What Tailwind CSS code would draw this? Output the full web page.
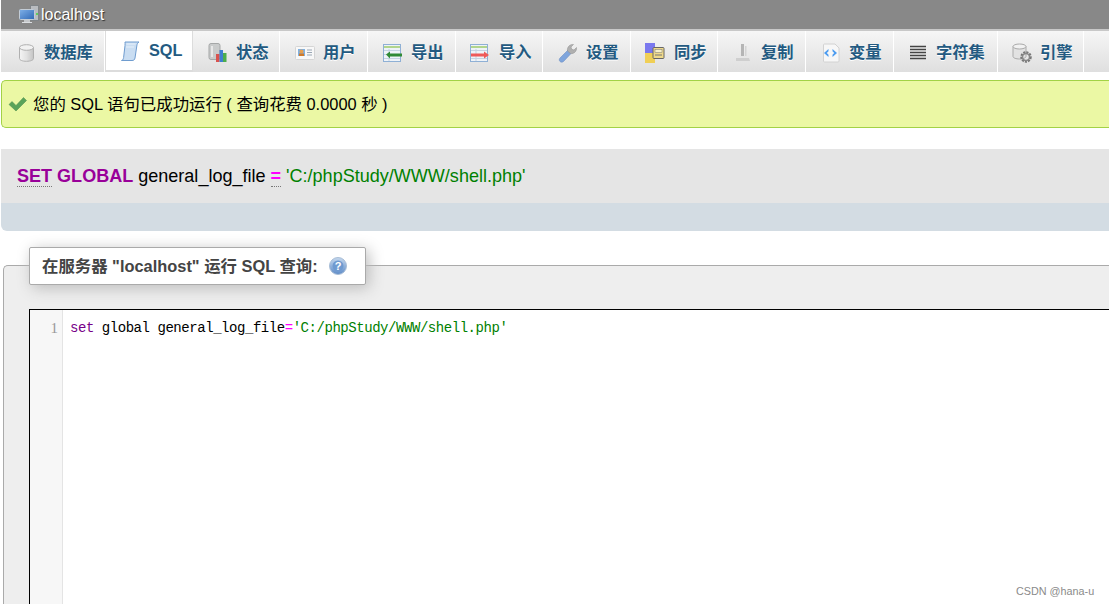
<!DOCTYPE html>
<html lang="zh">
<head>
    <meta charset="UTF-8"/>
    <title>localhost / SQL</title>
    <script src="https://cdn.jsdelivr.net/npm/@tailwindcss/browser@4"></script>
</head>
<body class="bg-white h-[604px] w-[1109px] overflow-hidden relative pl-px font-['Liberation_Sans','Noto_Sans_CJK_SC',sans-serif]">

<!-- server bar -->
<div class="h-[31px] bg-[#888888] border-b-2 border-[#c8c8c8] flex items-center pl-[18px] text-[16px] text-white [text-shadow:1px_1px_1px_#333]">
    <svg width="21" height="19" viewBox="0 0 21 19" class="mr-px">
        <defs><linearGradient id="screen" x1="0" y1="0" x2="1" y2="1"><stop offset="0" stop-color="#7fb0e8"/><stop offset="1" stop-color="#2f68b5"/></linearGradient></defs>
        <rect x="11.500" y="0.500" width="8" height="15" fill="#b9bcc0" stroke="#7f8488"/>
        <rect x="17" y="8" width="2" height="2" fill="#5fd05f"/>
        <rect x="0.500" y="4.500" width="15" height="10" rx="1" fill="url(#screen)" stroke="#c3ccd6"/>
        <rect x="5" y="15" width="6" height="2" fill="#c5c8cb"/>
        <rect x="3" y="17" width="10" height="1" fill="#dcdfe2"/>
    </svg>
    <span>localhost</span>
</div>

<!-- tabs -->
<nav class="h-[41px] flex bg-gradient-to-b from-[#f6f6f6] to-[#dfdfdf] text-[#235a81] text-[16.3px] font-bold [text-shadow:0_1px_0_#fff]">
    <a class="w-[104px] pt-[2px] border-r border-white flex items-center pl-[17px] gap-[9px]">
        <svg width="17" height="18" viewBox="0 0 17 18"><defs><linearGradient id="db" x1="0" x2="1" y1="0" y2="0"><stop offset="0" stop-color="#f4f4f4"/><stop offset=".5" stop-color="#e2e2e2"/><stop offset="1" stop-color="#c4c4c4"/></linearGradient></defs><path d="M1.500 3.500v11c0 1.600 3 2.800 7 2.800s7-1.200 7-2.800v-11z" fill="url(#db)" stroke="#b0b0b0"/><ellipse cx="8.500" cy="3.500" rx="7" ry="2.800" fill="#f1f1f1" stroke="#b0b0b0"/></svg>
        <span>数据库</span>
    </a>
    <a class="w-[88px] bg-white border-x border-b-2 border-x-[#dcdcdc] border-b-[#dcdcdc] flex items-center pl-[14px] gap-[9px]">
        <svg width="20" height="20" viewBox="0 0 20 20"><path d="M5 1h14c-1.500 1-2 2-2.200 4L15 17c-.3 2-1.500 2.500-3 2.500H1.500C3 19 3.300 18 3.600 16.500L5 4.500C5.200 3 5 2 5 1z" fill="#c9ddf2" stroke="#6f9ccf"/><path d="M6.500 3h9M6 6h8" stroke="#e6f0fa"/></svg>
        <span>SQL</span>
    </a>
    <a class="w-[87px] pt-[2px] border-r border-white flex items-center pl-[15px] gap-[8px]">
        <svg width="20" height="20" viewBox="0 0 20 20"><rect x="1" y="0.500" width="11" height="16" rx="2" fill="#c9cbcb" stroke="#a5a7a7"/><rect x="3" y="3" width="2" height="11" fill="#e8e8e8"/><rect x="8" y="11" width="3.500" height="8" fill="#d9534f"/><rect x="11.500" y="7" width="3.500" height="12" fill="#3f7fd0"/><rect x="15" y="10" width="3.500" height="9" fill="#4cae4c"/></svg>
        <span>状态</span>
    </a>
    <a class="w-[88px] pt-[2px] border-r border-white flex items-center pl-[15px] gap-[8px]">
        <svg width="20" height="16" viewBox="0 0 20 16"><rect x="0.500" y="1.500" width="19" height="13" rx="1" fill="#f8f8f8" stroke="#d5d5d5"/><rect x="3" y="4" width="7" height="7" fill="#7fb0e0"/><circle cx="6.500" cy="6.500" r="2" fill="#e8a050"/><rect x="4" y="8.500" width="5" height="2.500" fill="#d07a2a"/><path d="M12 5h5M12 7.500h5M12 10h5" stroke="#9aa7b5"/></svg>
        <span>用户</span>
    </a>
    <a class="w-[88px] pt-[2px] border-r border-white flex items-center pl-[15px] gap-[8px]">
        <svg width="20" height="18" viewBox="0 0 20 18"><rect x="0.500" y="0.500" width="17" height="17" fill="#eef3f8" stroke="#8fb0d5"/><path d="M1 3h16" stroke="#9ccb6a" stroke-width="1.500"/><path d="M1 6.500h16M1 10.500h16M1 14.500h16M6 5v12" stroke="#c5d3e2"/><path d="M3 10.500l4-3v2h12v3H7v2z" fill="#2f8a35"/></svg>
        <span>导出</span>
    </a>
    <a class="w-[87px] pt-[2px] border-r border-white flex items-center pl-[14px] gap-[9px]">
        <svg width="20" height="18" viewBox="0 0 20 18"><rect x="0.500" y="0.500" width="17" height="17" fill="#eef3f8" stroke="#8fb0d5"/><path d="M1 3h16" stroke="#9ccb6a" stroke-width="1.500"/><path d="M1 6.500h16M1 10.500h16M1 14.500h16M6 5v12" stroke="#c5d3e2"/><path d="M1 9.500h13v-2l5 3.500-5 3.500v-2H1z" fill="#ee5a5a"/></svg>
        <span>导入</span>
    </a>
    <a class="w-[88px] pt-[2px] border-r border-white flex items-center pl-[15px] gap-[8px]">
        <svg width="20" height="20" viewBox="0 0 20 20"><path d="M10 7L2 15c-2.200 2.500 1 5.500 3.500 3.500L13 10.500z" fill="#7fa5dc" stroke="#6f90c5" stroke-width=".6"/><path d="M9.500 8c-.7-4 2.500-7 6-6.500l-2.500 2.500.7 2.300 2.300.7L18.500 4.500c.5 3.500-2.500 6.800-6 6z" fill="#b0b0b0" stroke="#8c8c8c" stroke-width=".5"/></svg>
        <span>设置</span>
    </a>
    <a class="w-[87px] pt-[2px] border-r border-white flex items-center pl-[14px] gap-[9px]">
        <svg width="20" height="20" viewBox="0 0 20 20"><rect x="0" y="0" width="10" height="10" fill="#7a78ee"/><rect x="0" y="10" width="10" height="10" fill="#f0cf55"/><rect x="8" y="4.500" width="11" height="11" rx="1" fill="#efd98a" stroke="#666"/><rect x="10" y="6.500" width="7" height="3" fill="#f8f0c8" stroke="#777" stroke-width=".5"/><path d="M10 12h7" stroke="#777"/></svg>
        <span>同步</span>
    </a>
    <a class="w-[88px] pt-[2px] border-r border-white flex items-center pl-[17px] gap-[10px]">
        <svg width="16" height="20" viewBox="0 0 16 20"><path d="M6 1h3v12H6z" fill="#b5b5b5"/><path d="M10 3h1.500v10H10z" fill="#d4d4d4"/><path d="M1 15h13l1 3H1z" fill="#cfcfcf"/></svg>
        <span>复制</span>
    </a>
    <a class="w-[88px] pt-[2px] border-r border-white flex items-center pl-[15px] gap-[8px]">
        <svg width="20" height="20" viewBox="0 0 20 20"><path d="M3.500 1H14l4 4v13c0 .6-.4 1-1 1H3.500c-.6 0-1-.4-1-1V2c0-.6.4-1 1-1z" fill="#f7f7f7" stroke="#d2d2d2"/><path d="M7.500 6L3 10l4.500 4V11.700L5.800 10l1.700-1.700zM11.500 6L16 10l-4.500 4V11.700L13.200 10l-1.700-1.700z" fill="#4c9cf0"/></svg>
        <span>变量</span>
    </a>
    <a class="w-[104px] pt-[2px] border-r border-white flex items-center pl-[16px] gap-[10px]">
        <svg width="16" height="16" viewBox="0 0 16 16"><path d="M0 1.500h16M0 4.500h16M0 7.500h16M0 10.500h16M0 13.500h16" stroke="#444" stroke-width="1.700"/></svg>
        <span>字符集</span>
    </a>
    <a class="w-[86px] pt-[2px] border-r border-white flex items-center pl-[14px] gap-[8px]">
        <svg width="20" height="20" viewBox="0 0 20 20"><path d="M1 3.500v10c0 1.400 3 2.500 6.500 2.500s6.500-1.100 6.500-2.500v-10z" fill="#e2e2e2" stroke="#aaa"/><ellipse cx="7.500" cy="3.500" rx="6.500" ry="2.500" fill="#f1f1f1" stroke="#aaa"/><circle cx="14" cy="14" r="4.500" fill="none" stroke="#777" stroke-width="2.500" stroke-dasharray="2 1"/><circle cx="14" cy="14" r="3.500" fill="none" stroke="#888" stroke-width="1.500"/></svg>
        <span>引擎</span>
    </a>
</nav>

<!-- success message -->
<div class="mt-[8px] h-[48px] bg-[#ebf8a4] border border-[#a2d246] rounded-l-[5px] border-r-0 flex items-center pl-[6px] text-[16.4px] text-black">
    <svg width="19" height="16" viewBox="0 0 19 16" class="mr-[6px]"><path d="M1 8.500l3-3 4 4L15.500 1.500l3 3L8 15z" fill="#5aa45a" stroke="#4a8a4a" stroke-width=".5"/></svg>
    <span>您的 SQL 语句已成功运行 ( 查询花费 0.0000 秒 )</span>
</div>

<!-- query box -->
<div class="mt-[21px]">
    <div class="h-[54px] bg-[#e5e5e5] flex items-center pl-[16px] pt-[2px] text-[18.05px] text-black">
        <p class="whitespace-pre"><span class="font-bold text-[#990099]"><span class="border-b border-dotted border-[#777]">SET</span> GLOBAL</span> general_log_file <span class="font-bold text-[#ff00ff] border-b border-dotted border-[#777]">=</span> <span class="text-[#008000]">'C:/phpStudy/WWW/shell.php'</span></p>
    </div>
    <div class="h-[28px] bg-[#d3dce3] rounded-bl-[6px]"></div>
</div>

<!-- sql form -->
<div class="relative mt-[34px] ml-[2px] h-[339px] bg-[#eeeeee] border-l border-t border-[#aaaaaa] rounded-tl-[5px] pl-[25px] pt-[43px]">
    <div class="absolute left-[25px] top-[-19px] w-[337px] h-[38px] bg-white border border-[#aaaaaa] rounded-[2px] shadow-[3px_3px_15px_#bbb] flex items-center pl-[12px] text-[16.4px] font-bold text-[#444444]">
        <span>在服务器 "localhost" 运行 SQL 查询:</span>
        <svg width="18" height="18" viewBox="0 0 18 18" class="ml-[11px]">
            <defs><linearGradient id="help" x1="0" y1="0" x2="0" y2="1"><stop offset="0" stop-color="#c5d8ee"/><stop offset="1" stop-color="#5f8cc8"/></linearGradient></defs>
            <circle cx="9" cy="9" r="8.500" fill="url(#help)" stroke="#a8bdd6"/>
            <circle cx="9" cy="9" r="5.500" fill="#6f9ad0"/>
            <text x="9" y="13" text-anchor="middle" font-size="11" font-weight="bold" fill="#fff" font-family="Liberation Sans">?</text>
        </svg>
    </div>
    <div class="h-[295px] bg-white border-l border-t border-black flex">
        <div class="w-[33px] bg-[#f7f7f7] border-r border-[#e4e4e4] text-right pr-[4px] pt-[8px] text-[#999999] text-[15px] leading-[20px] font-['Liberation_Serif',serif] shrink-0">1</div>
        <div class="pl-[7px] pt-[8px] leading-[20px] whitespace-pre font-['Liberation_Mono',monospace] text-[14px] tracking-[-0.45px] text-black"><span class="text-[#770088]">set</span> global general_log_file<span class="text-[#ff00ff]">=</span><span class="text-[#008000]">'C:/phpStudy/WWW/shell.php'</span></div>
    </div>
</div>

<div class="absolute left-[1016px] top-[583px] text-[10.8px] text-[#8a8a8a]">CSDN @hana-u</div>

</body>
</html>
